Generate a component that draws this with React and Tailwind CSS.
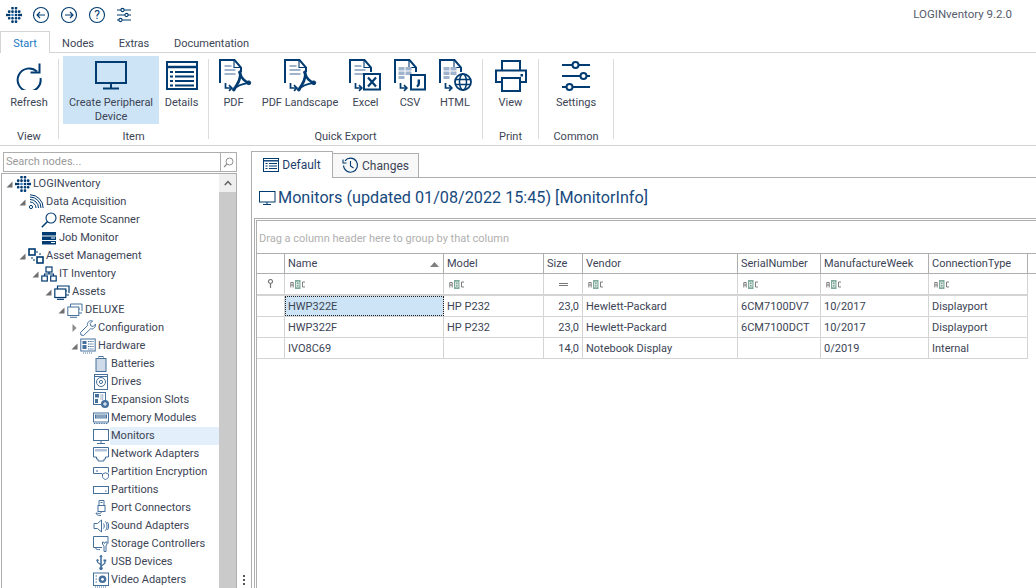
import React from "react";

const D = "#003b71";
const L = "#45709c";
const P = "#9fb3cc";

const S = ({ s = 32, w, h, children, vb, className = "" }) => (
  <svg width={w || s} height={h || s} viewBox={vb || `0 0 ${w || s} ${h || s}`} fill="none" className={`shrink-0 ${className}`}>
    {children}
  </svg>
);

const Logo = ({ s = 16 }) => {
  const pts = [
    [6.5, 1.2], [10, 1.2],
    [3.2, 4.6], [6.5, 4.6], [10, 4.6], [13.2, 4.6],
    [0.9, 8], [3.2, 8], [6.5, 8], [10, 8], [13.2, 8], [15.2, 8],
    [3.2, 11.2], [6.5, 11.2], [10, 11.2], [13.2, 11.2],
    [6.5, 14.6], [10, 14.6],
  ];
  return (
    <S s={s} vb="0 0 16 16">
      {pts.map(([x, y], i) => (
        <rect key={i} x={x - 1.3} y={y - 1.3} width="2.6" height="2.6" rx="1" fill={i === 8 ? "#3f7fbf" : D} />
      ))}
    </S>
  );
};

const CircleIcon = ({ children }) => (
  <S s={18} vb="0 0 18 18">
    <circle cx="9" cy="9" r="7.5" stroke={D} strokeWidth="1.1" />
    {children}
  </S>
);

const Sliders = ({ s = 16, sw = 1.1, vb = "0 0 16 16" }) => (
  <S s={s} vb={vb}>
    <g stroke={D} strokeWidth={sw}>
      <path d="M1 3h4M8 3h7M1 8h8M12 8h3M1 13h2M6 13h9" />
      <circle cx="6.5" cy="3" r="1.6" />
      <circle cx="10.5" cy="8" r="1.6" />
      <circle cx="4.5" cy="13" r="1.6" />
    </g>
  </S>
);

const DocBase = ({ children }) => (
  <S w={33} h={33}>
    <path d="M1 24V1h14.500l6.500 7.500V13" stroke={D} strokeWidth="2" />
    <path d="M15 1.500v7h7" stroke={D} strokeWidth="1.100" />
    <path d="M6.500 24v5h6" stroke={D} strokeWidth="1.700" />
    <path d="M10 26.200l2.800 2.800L10 31.800" stroke={D} strokeWidth="1.700" />
    {children}
  </S>
);

const TextLines = () => (
  <path d="M5.500 7h7M5.500 11h11M5.500 15h11" stroke={P} strokeWidth="2" />
);

const Acrobat = () => (
  <g stroke={D} fill="none">
    <path d="M14.500 31C18 26 22.500 20 21 13.500" strokeWidth="2.600" />
    <path d="M21 14C22 19 26 23 30 23.800" strokeWidth="2.600" />
    <path d="M14.500 31C18 26.500 24 24.500 30 23.800" strokeWidth="1.800" />
    <circle cx="29.800" cy="23.800" r="1.900" fill={D} />
    <circle cx="14.800" cy="30.600" r="1.400" fill={D} />
    <circle cx="20.800" cy="13.200" r="1.200" fill={D} />
  </g>
);

const SheetGrid = () => (
  <g fill={P}>
    <rect x="4.500" y="8" width="6" height="3.500" />
    <rect x="11.500" y="8" width="6" height="3.500" />
    <rect x="4.500" y="12.500" width="6" height="3.500" />
    <rect x="11.500" y="12.500" width="6" height="3.500" />
    <rect x="4.500" y="17" width="6" height="3" />
  </g>
);

const big = {
  refresh: (
    <S w={26} h={28}>
      <path d="M21 9.500A11.500 11.500 0 1 0 24.500 16" stroke={D} strokeWidth="2" />
      <path d="M14.500 10.500H23.500V1.500" stroke={D} strokeWidth="2" />
    </S>
  ),
  monitor: (
    <S w={32} h={29}>
      <rect x="1" y="1" width="30" height="21" stroke={D} strokeWidth="2" />
      <path d="M16 23v4M8 27.500h16" stroke={D} strokeWidth="2" />
    </S>
  ),
  details: (
    <S w={32} h={29}>
      <rect x="1" y="1" width="30" height="27" stroke={D} strokeWidth="2" />
      <path d="M1 6h30" stroke={D} strokeWidth="2.500" />
      <path d="M4 11h3M9 11h19M4 15.500h3M9 15.500h19M4 20h3M9 20h19M4 24.500h3M9 24.500h19" stroke={D} strokeWidth="2" />
    </S>
  ),
  pdf: (
    <DocBase>
      <TextLines />
      <Acrobat />
    </DocBase>
  ),
  excel: (
    <DocBase>
      <TextLines />
      <rect x="15" y="15" width="16" height="15.500" fill="#fff" stroke={D} strokeWidth="2" />
      <path d="M19 18.500l8 9M27 18.500l-8 9" stroke={D} strokeWidth="2.200" />
    </DocBase>
  ),
  csv: (
    <DocBase>
      <SheetGrid />
      <rect x="17" y="16" width="14" height="14.500" fill="#fff" stroke={D} strokeWidth="2" />
      <path d="M24.800 20.500v4c0 1.500-.8 2.500-2 3" stroke={D} strokeWidth="2.400" />
    </DocBase>
  ),
  html: (
    <DocBase>
      <SheetGrid />
      <circle cx="24" cy="23" r="8" fill="#fff" stroke={D} strokeWidth="1.800" />
      <ellipse cx="24" cy="23" rx="3.500" ry="8" stroke={D} strokeWidth="1.500" />
      <path d="M16.500 20.500h15M16.500 25.500h15" stroke={D} strokeWidth="1.500" />
    </DocBase>
  ),
  printer: (
    <S w={32} h={32}>
      <path d="M7 11V1h18v10" stroke={D} strokeWidth="2" />
      <path d="M7 22H1V10.500h30V22h-6" stroke={D} strokeWidth="2" />
      <rect x="7" y="18" width="18" height="13" stroke={D} strokeWidth="2" />
      <rect x="25.500" y="14" width="2.500" height="2.500" fill={D} />
    </S>
  ),
  settings: (
    <S w={30} h={32}>
      <g stroke={D} strokeWidth="2">
        <path d="M1 5h10M18 5h11M1 16h18M26 16h3M1 27h4M12 27h17" />
        <circle cx="14.500" cy="5" r="3" />
        <circle cx="22.500" cy="16" r="3" />
        <circle cx="8.500" cy="27" r="3" />
      </g>
    </S>
  ),
};

const t16 = (el) => <S s={16}>{el}</S>;
const sw1 = { stroke: L, strokeWidth: 1 };
const dk1 = { stroke: D, strokeWidth: 1.2 };

const tree = {
  logo: <Logo s={16} />,
  signal: t16(
    <g stroke={D} strokeWidth="1">
      <circle cx="3" cy="13" r="1.600" />
      <path d="M2 8a6 6 0 0 1 6 6M2 5.500a8.500 8.500 0 0 1 8.500 8.500M2 3a11 11 0 0 1 11 11M2 .8a13.200 13.200 0 0 1 13.200 13.200" />
    </g>
  ),
  search: t16(
    <g stroke={D} strokeWidth="1.100">
      <circle cx="10" cy="6" r="5" />
      <path d="M6.500 9.500L.8 15.200" strokeWidth="1.500" />
    </g>
  ),
  job: t16(
    <g fill={D}>
      <rect x="1" y="2" width="14" height="3.500" />
      <rect x="1" y="6.500" width="14" height="3.500" />
      <rect x="1" y="11" width="14" height="3.500" />
      <rect x="10" y="7.500" width="4" height="1" fill="#fff" />
      <rect x="10" y="12" width="4" height="1" fill="#fff" />
    </g>
  ),
  asset: t16(
    <g {...dk1} strokeWidth="1.600">
      <rect x="1" y="1" width="6" height="6" />
      <rect x="9" y="9" width="6" height="6" />
      <path d="M8 4h2M12 5v2M4 9v2M5 12h2" strokeWidth="1" />
    </g>
  ),
  network: t16(
    <g {...dk1}>
      <rect x="5" y="1" width="6" height="5" />
      <rect x=".8" y="10" width="5.500" height="5" />
      <rect x="9.700" y="10" width="5.500" height="5" />
      <path d="M8 6v2M3.500 10V8h9v2" />
    </g>
  ),
  assets: t16(
    <g {...dk1}>
      <rect x=".8" y="5" width="11" height="8.500" />
      <path d="M3.500 5V2h11.500v7M12 11h3M12 7h1" />
      <path d="M3 15.300h7" />
    </g>
  ),
  deluxe: t16(
    <g {...sw1}>
      <rect x=".8" y="5" width="11" height="8.500" />
      <path d="M3.500 5V2h11.500v7M12 11h3M12 7h1" />
      <path d="M3 15.300h7" />
    </g>
  ),
  wrench: t16(
    <path d="M1 15l-.5-2.500 7-7C6.800 3 8.600.7 11.500.7l1 .2-2.300 2.600.6 2.400 2.400.6 2.300-2.400c.4 3-2 5.400-5 4.700l-7 6.800z" {...sw1} />
  ),
  hardware: t16(
    <g>
      <rect x=".8" y="1" width="14.400" height="12" {...sw1} />
      <rect x="2.500" y="3" width="4" height="3" fill={L} />
      <rect x="2.500" y="7" width="4" height="4" fill={L} />
      <path d="M8 3.500h5.500M8 6h5.500M8 8.500h5.500M8 11h5.500" stroke={L} strokeDasharray="1.500 .7" />
      <path d="M3 15h10" stroke={L} strokeDasharray="1 1" />
    </g>
  ),
  battery: t16(
    <g {...sw1}>
      <rect x="3" y="2.500" width="10" height="13" fill="#cfdbe8" />
      <rect x="6" y=".5" width="4" height="2" />
    </g>
  ),
  drive: t16(
    <g {...sw1}>
      <rect x="1.500" y=".5" width="13" height="15" />
      <circle cx="8" cy="8" r="4.500" />
      <circle cx="8" cy="8" r="1.600" />
      <path d="M2 2.500h12" />
    </g>
  ),
  slots: t16(
    <g>
      <rect x=".5" y=".5" width="12" height="12" {...sw1} />
      <rect x="2" y="2" width="4" height="3.500" fill={L} />
      <rect x="2" y="7" width="3" height="4" fill={L} />
      <path d="M7.500 3h3.500M7.500 5h3.500M7.500 7h3" stroke={L} strokeDasharray="1 .7" />
      <circle cx="12" cy="12" r="4" fill={L} />
      <path d="M10 12h4M12 10v4" stroke="#fff" />
    </g>
  ),
  memory: t16(
    <g>
      <rect x=".5" y="3" width="15" height="9" {...sw1} />
      <rect x="2" y="4.500" width="12" height="4" fill={L} />
      <path d="M4 4.500v4M6 4.500v4M8 4.500v4M10 4.500v4M12 4.500v4" stroke="#fff" strokeWidth=".7" />
      <path d="M1 13.500h14" stroke={L} strokeDasharray="1 .7" />
    </g>
  ),
  monitor: t16(
    <g {...sw1}>
      <rect x=".5" y="1.500" width="15" height="11" />
      <path d="M8 13v2M4 15.500h8" />
    </g>
  ),
  nic: t16(
    <g>
      <path d="M.5 1.500h15v9.500H12.500v2H11v2H5v-2H3.500v-2H.5z" {...sw1} />
      <rect x="2" y="3" width="12" height="2.500" fill="#b3c4d8" />
    </g>
  ),
  encrypt: t16(
    <g {...sw1}>
      <path d="M9 9.500H.5v-6h15v5" />
      <path d="M3 7h2" />
      <path d="M9.500 10l3-1.200 3 1.200v2.500c0 1.500-1.500 2.500-3 3-1.500-.5-3-1.500-3-3z" />
    </g>
  ),
  partition: t16(
    <g {...sw1}>
      <rect x=".5" y="4.500" width="15" height="7" />
      <path d="M12 9h1.500" />
    </g>
  ),
  port: t16(
    <g {...sw1}>
      <rect x="5" y="5.500" width="7" height="6" />
      <path d="M6 5.500V.5h5v5" />
      <path d="M7.500 2.500h2" />
      <path d="M8.500 11.500c0 2.500-3 2-5.500 1.500 0 1.500 1.500 2.500 5 2.500" />
    </g>
  ),
  sound: t16(
    <g {...sw1}>
      <path d="M1 5.500h3.500L8.500 2v12L4.500 10.500H1z" />
      <path d="M10.500 5.500c1 1.500 1 3.500 0 5M12.500 3.500c2 3 2 6 0 9M14.500 4c1.500 2.500 1.500 5.500 0 8" />
    </g>
  ),
  storage: t16(
    <g {...sw1}>
      <path d="M9 11.500H.5V.5h14.500v7" />
      <path d="M2 11.500c1 2 3 2.500 5 2" />
      <path d="M11 15.500V10L9.500 8V6h1l1 1.500 1-1.500h1.500v2L13 10v5.500z" fill="#fff" />
    </g>
  ),
  usb: t16(
    <path
      d="M8 .5l1.800 2.500H8.800V11l2.400-2V7.500h-.7V5.500h2.800v2h-.8v2L8.800 12.500v.5a1.700 1.700 0 1 1-1.600 0V11L4 8.500V7.500a1.200 1.200 0 1 1 1 0v.6l2.200 1.400V3H6.200z"
      fill={L}
    />
  ),
  video: t16(
    <g>
      <rect x=".5" y="1" width="15" height="12.500" {...sw1} />
      <path d="M2.500 4h1.500M2.500 7h1.500M2.500 10h1.500" stroke={L} />
      <circle cx="9.500" cy="7.300" r="3.800" fill={L} />
      <circle cx="9.500" cy="7.300" r="1.400" fill="#fff" />
      <path d="M2 15h12" stroke={L} strokeDasharray="1 1" />
    </g>
  ),
};

const nodes = [
  [0, "o", "logo", "LOGINventory"],
  [1, "o", "signal", "Data Acquisition"],
  [2, "", "search", "Remote Scanner"],
  [2, "", "job", "Job Monitor"],
  [1, "o", "asset", "Asset Management"],
  [2, "o", "network", "IT Inventory"],
  [3, "o", "assets", "Assets"],
  [4, "o", "deluxe", "DELUXE"],
  [5, "c", "wrench", "Configuration"],
  [5, "o", "hardware", "Hardware"],
  [6, "", "battery", "Batteries"],
  [6, "", "drive", "Drives"],
  [6, "", "slots", "Expansion Slots"],
  [6, "", "memory", "Memory Modules"],
  [6, "", "monitor", "Monitors", true],
  [6, "", "nic", "Network Adapters"],
  [6, "", "encrypt", "Partition Encryption"],
  [6, "", "partition", "Partitions"],
  [6, "", "port", "Port Connectors"],
  [6, "", "sound", "Sound Adapters"],
  [6, "", "storage", "Storage Controllers"],
  [6, "", "usb", "USB Devices"],
  [6, "", "video", "Video Adapters"],
];

const Expander = ({ state }) => (
  <span className="w-[9px] h-[10px] flex items-center justify-center shrink-0 mr-[1px]">
    {state === "o" && (
      <svg width="7" height="7" viewBox="0 0 7 7"><path d="M6.500 .5V6.500H.5z" fill="#6f6f6f" /></svg>
    )}
    {state === "c" && (
      <svg width="5" height="8" viewBox="0 0 5 8"><path d="M.5 0L4.500 4 .5 8z" fill="#8a8a8a" /></svg>
    )}
  </span>
);

const TreeRow = ({ n }) => {
  const [level, state, icon, label, sel] = n;
  return (
    <div className="h-[18px] flex items-center shrink-0" style={{ paddingLeft: 3 + level * 13 }}>
      <Expander state={state} />
      <span className="w-4 h-4 mr-[1px] shrink-0 flex">{tree[icon]}</span>
      <span className={`h-[18px] leading-[18px] pl-[1px] flex-1 whitespace-nowrap text-[#3c4455] ${sel ? "bg-[#e3effa]" : ""}`}>{label}</span>
    </div>
  );
};

const RibbonBtn = ({ w, icon, label, active }) => (
  <div
    style={{ width: w }}
    className={`h-[68px] flex flex-col items-center shrink-0 ${active ? "bg-[#cde4f6]" : ""}`}
  >
    <div className="h-[38px] flex items-center justify-center shrink-0 pt-px">{icon}</div>
    <div className="text-center leading-[14px] mt-[2px] text-[#3c4455]">{label}</div>
  </div>
);

const Group = ({ w, label, children, pl = 0 }) => (
  <div style={{ width: w }} className="flex shrink-0">
    <div className="flex-1 min-w-0 flex flex-col">
      <div className="flex h-[73px]" style={{ paddingLeft: pl }}>{children}</div>
      <div className="h-[16px] text-center leading-[16px] text-[#3c4455]">{label}</div>
    </div>
    <div className="w-[1px] h-[80px] mt-[3px] bg-[#dcdcdc] shrink-0" />
  </div>
);

const cols = [
  ["Name", 159], ["Model", 100], ["Size", 39], ["Vendor", 155],
  ["SerialNumber", 83], ["ManufactureWeek", 108], ["ConnectionType", 99],
];

const Abc = () => (
  <svg width="16" height="9" viewBox="0 0 16 9">
    <rect x="5" y="0" width="5.500" height="9" fill="#7fa99a" />
    <path d="M.8 7.500V2.500h2.400v5M.8 5h2.400" stroke="#707070" strokeWidth=".9" fill="none" />
    <path d="M6.500 2h2.500v5H6.500zM6.500 4.500h2.500" stroke="#e8f0ec" strokeWidth=".8" fill="none" />
    <path d="M15 2h-2.500v5H15" stroke="#707070" strokeWidth=".9" fill="none" />
  </svg>
);

const rows = [
  ["HWP322E", "HP P232", "23,0", "Hewlett-Packard", "6CM7100DV7", "10/2017", "Displayport"],
  ["HWP322F", "HP P232", "23,0", "Hewlett-Packard", "6CM7100DCT", "10/2017", "Displayport"],
  ["IVO8C69", "", "14,0", "Notebook Display", "", "0/2019", "Internal"],
];

export default function App() {
  return (
    <div className="w-[1036px] h-[588px] overflow-hidden bg-white flex flex-col text-[11px] text-[#3c4455]" style={{ fontFamily: 'Roboto, sans-serif' }}>
      {/* title bar */}
      <div className="h-[30px] flex items-center shrink-0 pl-[6px] pr-[24px]">
        <Logo s={16} />
        <div className="flex items-center gap-[10px] ml-[10px]">
          <CircleIcon><path d="M13 9H5M8 6L5 9l3 3" stroke={D} strokeWidth="1.100" /></CircleIcon>
          <CircleIcon><path d="M5 9h8M10 6l3 3-3 3" stroke={D} strokeWidth="1.100" /></CircleIcon>
          <CircleIcon><text x="9" y="13" textAnchor="middle" fontSize="12" fill={D} fontFamily="Roboto">?</text></CircleIcon>
          <Sliders />
        </div>
        <div className="ml-auto text-[11.500px] text-[#555c6b]">LOGINventory 9.2.0</div>
      </div>
      {/* tabs */}
      <div className="h-[23px] flex items-end shrink-0 border-b border-[#d4d4d4]">
        <div className="h-[22px] w-[50px] -mb-px pt-[3px] bg-white border border-b-0 border-[#d4d4d4] flex items-center justify-center text-[#1b78c4]">Start</div>
        <div className="w-[56px] h-[21px] pt-[5px] flex items-center justify-center">Nodes</div>
        <div className="w-[56px] h-[21px] pt-[5px] flex items-center justify-center">Extras</div>
        <div className="w-[99px] h-[21px] pt-[5px] flex items-center justify-center">Documentation</div>
      </div>
      {/* ribbon */}
      <div className="h-[93px] flex items-start pt-[3px] shrink-0 border-b border-[#d4d4d4]">
        <Group w={59} label="View"><RibbonBtn w={58} icon={big.refresh} label="Refresh" /></Group>
        <Group w={150} label="Item" pl={4}>
          <RibbonBtn w={96} icon={big.monitor} label={<>Create Peripheral<br />Device</>} active />
          <RibbonBtn w={45} icon={big.details} label="Details" />
        </Group>
        <Group w={274} label="Quick Export" pl={2}>
          <RibbonBtn w={45} icon={<span className="flex ml-[3px]">{big.pdf}</span>} label="PDF" />
          <RibbonBtn w={88} icon={big.pdf} label="PDF Landscape" />
          <RibbonBtn w={43} icon={big.excel} label="Excel" />
          <RibbonBtn w={46} icon={big.csv} label="CSV" />
          <RibbonBtn w={44} icon={big.html} label="HTML" />
        </Group>
        <Group w={56} label="Print"><RibbonBtn w={55} icon={big.printer} label="View" /></Group>
        <Group w={75} label="Common"><RibbonBtn w={74} icon={big.settings} label="Settings" /></Group>
      </div>
      {/* body */}
      <div className="flex-1 min-h-0 flex">
        {/* left */}
        <div className="w-[237px] shrink-0 flex flex-col pt-[6px] pl-px">
          <div className="ml-[2px] h-[20px] flex border border-[#aeaeae] shrink-0">
            <div className="flex-1 pl-[2px] leading-[18px] text-[#9a9a9a] text-[11px]">Search nodes...</div>
            <div className="w-[16px] border-l border-[#aeaeae] flex items-center justify-center">
              <svg width="11" height="11" viewBox="0 0 11 11" fill="none">
                <circle cx="6.500" cy="4.500" r="3.500" stroke="#8f8f8f" />
                <path d="M4 7L1 10" stroke="#8f8f8f" strokeWidth="1.200" />
              </svg>
            </div>
          </div>
          <div className="mt-px flex-1 min-h-0 flex border border-[#aeaeae] border-b-0">
            <div className="flex-1 min-w-0 flex flex-col pt-px overflow-hidden">
              {nodes.map((n) => <TreeRow key={n[3]} n={n} />)}
            </div>
            <div className="w-[17px] shrink-0 flex flex-col bg-[#cacaca]">
              <div className="h-[18px] bg-[#efefef] flex items-center justify-center">
                <svg width="8" height="6" viewBox="0 0 8 6" fill="none"><path d="M.8 5L4 1.500 7.200 5" stroke="#606060" strokeWidth="1.500" /></svg>
              </div>
            </div>
          </div>
        </div>
        {/* splitter */}
        <div className="w-[14px] shrink-0 flex flex-col items-center justify-end pb-[3px] gap-[2px]">
          <span className="w-[2px] h-[2px] bg-[#555]" />
          <span className="w-[2px] h-[2px] bg-[#555]" />
          <span className="w-[2px] h-[2px] bg-[#555]" />
        </div>
        {/* right */}
        <div className="flex-1 min-w-0 flex flex-col pt-[5px]">
          <div className="h-[27px] flex items-end shrink-0 border-b border-[#aeaeae]">
            <div className="w-[82px] h-[27px] -mb-px bg-white border border-b-0 border-[#aeaeae] flex items-center justify-center gap-[3px] text-[12px] text-[#1d3f6b]">
              <svg width="16" height="14" viewBox="0 0 16 14" fill="none">
                <rect x=".5" y=".5" width="15" height="13" stroke={D} />
                <path d="M.5 2.800h15" stroke={D} strokeWidth="1.400" />
                <path d="M2.500 5.500h2M6 5.500h8M2.500 8h2M6 8h8M2.500 10.500h2M6 10.500h8" stroke={D} />
              </svg>
              Default
            </div>
            <div className="w-[86px] h-[24px] bg-[#f8f8f8] border border-b-0 border-l-0 border-[#aeaeae] flex items-center justify-center gap-[3px] text-[12px]">
              <svg width="17" height="17" viewBox="0 0 17 17" fill="none">
                <path d="M3 3.800A7 7 0 1 1 1.500 8.500" stroke={D} strokeWidth="1.100" />
                <path d="M1 2.500V6h3.500M8.500 4v5l3 2" stroke={D} strokeWidth="1.100" />
              </svg>
              Changes
            </div>
          </div>
          <div className="flex-1 min-h-0 flex flex-col border-l border-[#aeaeae]">
            <div className="h-[40px] flex items-center pl-[7px] shrink-0">
              <svg width="17" height="16" viewBox="0 0 17 16" fill="none" className="mr-[2px]">
                <rect x=".5" y="1.500" width="15.500" height="10.500" stroke={D} />
                <path d="M8 12v2M4 14.500h8" stroke={D} />
              </svg>
              <span className="text-[16.200px] leading-[20px] text-[#174a7e] whitespace-nowrap">Monitors (updated 01/08/2022 15:45) [MonitorInfo]</span>
            </div>
            <div className="ml-[2px] flex-1 min-h-0 border-t-[3px] border-double border-[#aeaeae] border-l-[3px]">
              <div className="h-[32px] pt-[4px] flex items-center pl-[2px] text-[#b0b0b0]">Drag a column header here to group by that column</div>
              {/* header */}
              <div className="flex h-[21px] border-t border-b border-[#aeaeae]">
                <div className="w-[28px] shrink-0 border-r border-[#aeaeae]" />
                {cols.map(([c, w]) => (
                  <div key={c} style={{ width: w }} className="shrink-0 border-r border-[#aeaeae] flex items-center pt-px pl-[3px] pr-[4px] whitespace-nowrap">
                    <span className="flex-1">{c}</span>
                    {c === "Name" && <svg width="9" height="5" viewBox="0 0 9 5"><path d="M0 5L4.500 0 9 5z" fill="#808080" /></svg>}
                  </div>
                ))}
              </div>
              {/* filter row */}
              <div className="flex w-fit h-[22px] border-b-2 border-[#d4d4d4]">
                <div className="w-[28px] shrink-0 border-r border-[#d4d4d4] flex items-center justify-center pb-[2px]">
                  <svg width="7" height="9" viewBox="0 0 7 9" fill="none"><circle cx="3.500" cy="2.500" r="2" stroke="#777" strokeWidth="1.200" /><path d="M3.500 4.500V9" stroke="#777" strokeWidth="1.200" /></svg>
                </div>
                {cols.map(([c, w]) => (
                  <div key={c} style={{ width: w }} className={`shrink-0 border-r border-[#d4d4d4] flex items-center ${c === "Size" ? "justify-center" : "pl-[5px]"}`}>
                    {c === "Size" ? <span className="w-[9px] h-[3px] border-y border-[#777]" /> : <Abc />}
                  </div>
                ))}
              </div>
              {/* rows */}
              {rows.map((r, ri) => (
                <div key={ri} className="flex w-fit h-[21px] border-b border-[#d4d4d4]">
                  <div className="w-[28px] shrink-0 border-r border-[#d4d4d4]" />
                  {r.map((v, i) => (
                    <div
                      key={i}
                      style={{ width: cols[i][1] }}
                      className={`shrink-0 border-r border-[#d4d4d4] flex items-center pt-[3px] px-[3px] whitespace-nowrap overflow-hidden ${i === 2 ? "justify-end" : ""} ${ri === 0 && i === 0 ? "bg-[#cde4f6] outline-1 -outline-offset-1 outline-dotted outline-[#222]" : ""}`}
                    >
                      {v}
                    </div>
                  ))}
                </div>
              ))}
            </div>
          </div>
        </div>
      </div>
    </div>
  );
}
